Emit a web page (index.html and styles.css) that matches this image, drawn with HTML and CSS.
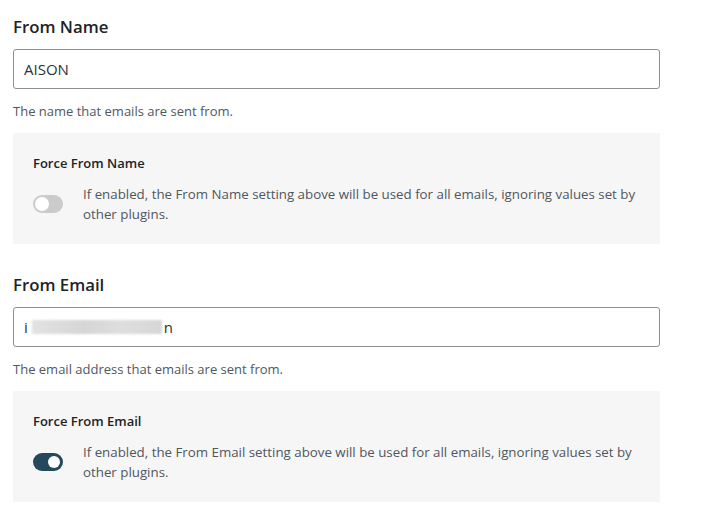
FILE: index.html
```html
<!DOCTYPE html>
<html>
<head>
<meta charset="utf-8">
<link rel="stylesheet" href="styles.css">
</head>
<body>
<div class="page">
  <section class="field">
    <h2 class="title">From Name</h2>
    <div class="input">AISON</div>
    <p class="desc">The name that emails are sent from.</p>
    <div class="box">
      <h3 class="box-title">Force From Name</h3>
      <div class="row">
        <span class="toggle off"><span class="knob"></span></span>
        <p class="box-text">If enabled, the From Name setting above will be used for all emails, ignoring values set by other plugins.</p>
      </div>
    </div>
  </section>
  <section class="field">
    <h2 class="title">From Email</h2>
    <div class="input">i<span class="blur"></span>n</div>
    <p class="desc">The email address that emails are sent from.</p>
    <div class="box">
      <h3 class="box-title">Force From Email</h3>
      <div class="row">
        <span class="toggle on"><span class="knob"></span></span>
        <p class="box-text">If enabled, the From Email setting above will be used for all emails, ignoring values set by other plugins.</p>
      </div>
    </div>
  </section>
</div>
</body>
</html>
```

FILE: styles.css
```css
* { box-sizing: border-box; }
html, body { margin: 0; padding: 0; background: #fff; }
body { font-family: "Open Sans", "Noto Sans", sans-serif; color: #50575e; }
.page { width: 716px; padding: 16px 56px 0 13px; }
.field { display: flex; flex-direction: column; margin-bottom: 30px; }
.title { margin: 0; font-size: 16.8px; font-weight: 600; color: #1d2327; line-height: 22px; }
.input {
  margin-top: 11px; height: 40px; border: 1px solid #8c8f94; border-radius: 3px;
  padding: 0 10px; display: flex; align-items: center; font-size: 15px; color: #2c3338;
}
.blur { display: inline-block; width: 130px; height: 14px; background: linear-gradient(90deg,#e2e2e2,#d6d6d6 40%,#dedede 70%,#d6d6d6); margin: 0 2px 0 4px; filter: blur(1px); }
.desc { margin: 13px 0 0; font-size: 13px; line-height: 18px; }
.box { margin-top: 13px; background: #f6f6f6; padding: 20px; height: 111px; }
.box-title { margin: 0; font-size: 13px; font-weight: 600; color: #1d2327; line-height: 20px; }
.row { display: flex; gap: 20px; margin-top: 11px; align-items: flex-start; }
.toggle { flex: none; width: 30px; height: 18px; border-radius: 9px; position: relative; margin-top: 11px; }
.toggle.off { background: #cbcbcb; }
.toggle.on { background: #24495c; }
.knob { position: absolute; top: 3px; width: 12px; height: 12px; border-radius: 50%; background: #fff; }
.off .knob { left: 2px; top: 2px; width: 14px; height: 14px; }
.on .knob { right: 3px; }
.box-text { margin: 0; font-size: 13.3px; line-height: 20px; }
```
